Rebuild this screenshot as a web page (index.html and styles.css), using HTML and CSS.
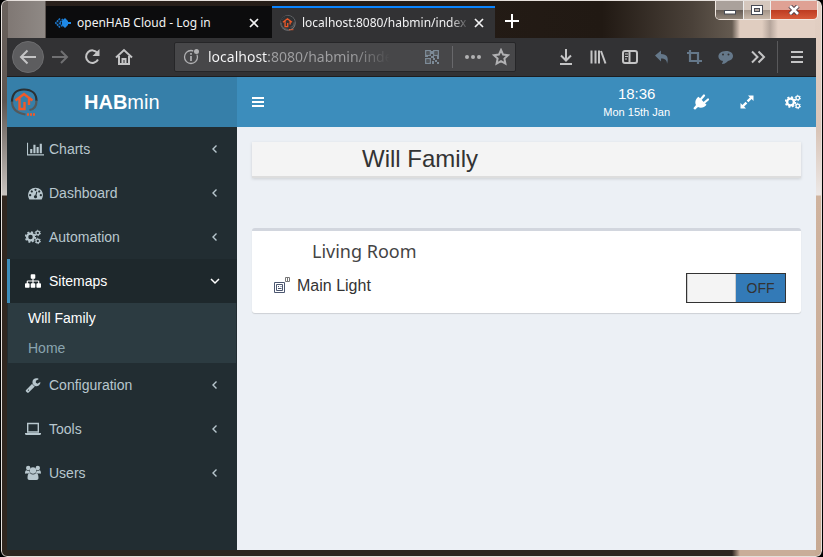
FILE: index.html
```html
<!DOCTYPE html>
<html lang="en">
<head>
<meta charset="utf-8">
<title>HABmin</title>
<link rel="stylesheet" href="styles.css">
</head>
<body>
<svg class="defs" aria-hidden="true">
  <symbol id="logo" viewBox="0 0 30 30">
    <path d="M2 15C2 7 6 2.500 14 2.500S26.500 7 26.500 14" fill="none" stroke="#2b3033" stroke-width="2.200"/>
    <path d="M2 14.500C2 22 6 26 15.500 27.500M26.500 13.500c0 6-2.500 9-7 9.500" fill="none" stroke="#54585a" stroke-width="2.200"/>
    <path d="M5.500 13.500L14 7l8.500 6.500M9.500 11.500V22h5v-7M19 11.500V18" fill="none" stroke="#f15a29" stroke-width="2.400"/>
    <path d="M17 27.500h8" stroke="#f15a29" stroke-width="2.400" stroke-dasharray="2 1"/>
  </symbol>
  <symbol id="gears" viewBox="0 0 16 16">
    <g fill="none" stroke="currentColor">
      <circle cx="5.500" cy="8" r="3.400" stroke-width="2.300"/>
      <circle cx="5.500" cy="8" r="4.900" stroke-width="1.600" stroke-dasharray="2 1.848"/>
      <circle cx="12.800" cy="4" r="1.800" stroke-width="1.300"/>
      <circle cx="12.800" cy="4" r="2.700" stroke-width="1" stroke-dasharray="1.400 1.427"/>
      <circle cx="12.800" cy="12" r="1.800" stroke-width="1.300"/>
      <circle cx="12.800" cy="12" r="2.700" stroke-width="1" stroke-dasharray="1.400 1.427"/>
    </g>
  </symbol>
  <symbol id="left" viewBox="0 0 10 10"><path d="M6.500 1.500L3 5l3.500 3.500" fill="none" stroke="currentColor" stroke-width="1.400"/></symbol>
  <symbol id="close" viewBox="0 0 10 10"><path d="M1 1l8 8M9 1L1 9" stroke="currentColor" stroke-width="1.700"/></symbol>
</svg>
<div class="window">
  <header class="titlebar">
    <div class="tabs">
      <div class="tab">
        <svg class="favicon" viewBox="0 0 16 16"><path d="M5 3.500L.800 8 5 12.500M8 4L4.500 8 8 12" fill="none" stroke="#1b75c9" stroke-width="1.700" stroke-dasharray="2 .6"/><path d="M10 3l3 3v1h3v2h-3v1l-3 3-3-3V6z" fill="#1e88e5"/></svg>
        <button class="tab-name" type="button">openHAB Cloud - Log in</button>
        <button class="close" type="button" aria-label="Close tab"><svg><use href="#close"/></svg></button>
      </div>
      <div class="tab active">
        <svg class="favicon" viewBox="0 0 30 30"><circle cx="15" cy="15" r="13.500" fill="none" stroke="#77777a" stroke-width="2"/><use href="#logo"/></svg>
        <button class="tab-name" type="button">localhost:8080/habmin/index</button>
        <button class="close" type="button" aria-label="Close tab"><svg><use href="#close"/></svg></button>
      </div>
      <button class="new-tab" type="button" aria-label="New tab"><svg viewBox="0 0 14 14"><path d="M7 0v14M0 7h14" stroke="#fff" stroke-width="2"/></svg></button>
    </div>
    <div class="controls">
      <button type="button" class="min" aria-label="Minimize"><svg viewBox="0 0 12 10"><rect x=".5" y="5.500" width="11" height="3.500" fill="#fff" stroke="#484b55"/></svg></button>
      <button type="button" class="max" aria-label="Maximize"><svg viewBox="0 0 12 10"><rect x=".5" y=".5" width="11" height="9" fill="#fff" stroke="#484b55"/><rect x="3.500" y="3.500" width="5" height="3" fill="#b7aaa1" stroke="#484b55"/></svg></button>
      <button type="button" class="quit" aria-label="Close"><svg viewBox="0 0 12 10"><path d="M2 1l8 8M10 1L2 9" stroke="#4a3b45" stroke-width="4.500"/><path d="M2 1l8 8M10 1L2 9" stroke="#fff" stroke-width="2.600"/></svg></button>
    </div>
  </header>
  <nav class="toolbar" aria-label="Browser">
    <button class="tool back" type="button" aria-label="Back"><svg viewBox="0 0 18 18"><path d="M17 9H2M8.500 2.500L2 9l6.500 6.500" class="line"/></svg></button>
    <button class="tool dim" type="button" aria-label="Forward"><svg viewBox="0 0 18 18"><path d="M1 9h15M10 3l6 6-6 6" class="line"/></svg></button>
    <button class="tool" type="button" aria-label="Reload"><svg viewBox="0 0 18 18"><path d="M14.500 5A6.300 6.300 0 1 0 15 11.500" class="line"/><path d="M16.500 1v7h-7z" fill="currentColor"/></svg></button>
    <button class="tool" type="button" aria-label="Home"><svg viewBox="0 0 18 18"><path d="M1 9.500L9 2l8 7.500M4 8v8h10V8" class="line"/><path d="M7.500 16v-5h3v5" class="line"/></svg></button>
    <div class="address">
      <svg class="info" viewBox="0 0 18 18"><circle cx="8" cy="9" r="6.500" fill="none" stroke="currentColor" stroke-width="1.300"/><path d="M8 8v5M8 5v1.700" stroke="currentColor" stroke-width="1.700"/><circle cx="13.500" cy="3.500" r="3.300" fill="#474749"/><circle cx="13.500" cy="3.500" r="2.500" fill="currentColor"/></svg>
      <input type="text" aria-label="Address" value="localhost:8080/habmin/index.html">
      <svg class="qr" viewBox="0 0 14 14"><g fill="none" stroke="currentColor" stroke-width="1.300"><path d="M.7.7h4.600v4.600H.7zM8.700.7h4.600v4.600H8.700zM.7 8.700h4.600v4.600H.7z"/></g><path d="M2.500 2.500h1v1h-1zM10.500 2.500h1v1h-1zM2.500 10.500h1v1h-1zM6 1h2v3H6zM6 6h3v2H6zM0 6h3v1H0zM8 8h2v2H8zM12 6h2v3h-2zM10 10h2v2h-2zM7 11h2v3H7zM12 12h2v2h-2z" fill="currentColor"/></svg>
      <button class="more" type="button" aria-label="Page actions"><svg viewBox="0 0 18 18"><circle cx="3" cy="9" r="2" fill="currentColor"/><circle cx="9" cy="9" r="2" fill="currentColor"/><circle cx="15" cy="9" r="2" fill="currentColor"/></svg></button>
      <button class="star" type="button" aria-label="Bookmark"><svg viewBox="0 0 18 18"><path d="M9 2l2.100 4.600 5 .6-3.700 3.400 1 5L9 13.100l-4.400 2.500 1-5L1.900 7.200l5-.6z" class="line"/></svg></button>
    </div>
    <button class="tool" type="button" aria-label="Downloads"><svg viewBox="0 0 18 18"><path d="M9 1v11M4 7.500l5 5 5-5M3 16h12" class="line"/></svg></button>
    <button class="tool" type="button" aria-label="Library"><svg viewBox="0 0 18 18"><path d="M2.500 2.500v13M6.500 2.500v13M10 2.500v13M12 3l4.500 12.500" class="line"/></svg></button>
    <button class="tool" type="button" aria-label="Sidebar"><svg viewBox="0 0 18 18"><rect x="2" y="3" width="14" height="12" rx="2" class="line"/><path d="M8.500 3v12" class="line"/><path d="M4 6h3M4 8.500h3M4 11h2" stroke="currentColor"/></svg></button>
    <button class="tool blue" type="button" aria-label="Undo"><svg viewBox="0 0 18 18"><path d="M2 7.500L8 2.500V6c6 0 8 3.500 6 10 0-4-2-5.500-6-5.500v3z" fill="currentColor"/></svg></button>
    <button class="tool blue" type="button" aria-label="Crop"><svg viewBox="0 0 18 18"><path d="M5 2v11h12M2 5h11v11" fill="none" stroke="currentColor" stroke-width="2.200"/></svg></button>
    <button class="tool blue" type="button" aria-label="Chat"><svg viewBox="0 0 18 18"><path d="M9 3c9 0 9 9 2 10-3 3-5 3-6 3l1-3C-1 12 0 3 9 3z" fill="currentColor"/><circle cx="6" cy="6.500" r="1" fill="#323234"/><circle cx="11.500" cy="6.500" r="1" fill="#323234"/></svg></button>
    <button class="tool" type="button" aria-label="More tools"><svg viewBox="0 0 18 18"><path d="M3 3.500L8.500 9 3 14.500M9.500 3.500L15 9l-5.500 5.500" class="line"/></svg></button>
    <span class="divider"></span>
    <button class="tool" type="button" aria-label="Menu"><svg viewBox="0 0 18 18"><path d="M3 4h12M3 9h12M3 14h12" class="line"/></svg></button>
  </nav>
  <div class="app">
    <aside class="sidebar">
      <a class="brand" href="#"><svg class="brand-logo"><use href="#logo"/></svg><span class="brand-name"><b>HAB</b>min</span></a>
      <nav aria-label="Main">
        <ul class="menu">
          <li><a href="#"><svg class="icon wide" viewBox="0 0 2048 1792"><path fill="currentColor" d="M640 896v512h-256v-512h256zm384-512v1024h-256v-1024h256zm1024 1152v128h-2048v-1536h128v1408h1920zm-640-896v768h-256v-768h256zm384-384v1152h-256v-1152h256z"/></svg><span>Charts</span><svg class="arrow"><use href="#left"/></svg></a></li>
          <li><a href="#"><svg class="icon wide" viewBox="-128 0 2048 1792"><path fill="currentColor" d="M384 1152q0-53-37.500-90.500t-90.500-37.500-90.500 37.500-37.500 90.500 37.500 90.500 90.500 37.500 90.500-37.500 37.500-90.500zm192-448q0-53-37.500-90.500t-90.500-37.500-90.500 37.500-37.500 90.500 37.500 90.500 90.500 37.500 90.500-37.500 37.500-90.500zm428 481l101-382q6-26-7.500-48.500t-38.500-29.500-48 6.500-30 39.500l-101 382q-60 5-107 43.500t-63 98.500q-20 77 20 146t117 89 146-20 89-117q16-60-6-117t-72-91zm660-33q0-53-37.500-90.500t-90.500-37.500-90.500 37.500-37.500 90.500 37.500 90.500 90.500 37.500 90.500-37.500 37.500-90.500zm-640-640q0-53-37.500-90.500t-90.500-37.500-90.500 37.500-37.500 90.500 37.500 90.500 90.500 37.500 90.500-37.500 37.500-90.500zm448 192q0-53-37.500-90.500t-90.500-37.500-90.500 37.500-37.500 90.500 37.500 90.500 90.500 37.500 90.500-37.500 37.500-90.500zm320 448q0 261-141 483-19 29-54 29h-1402q-35 0-54-29-141-221-141-483 0-182 71-348t191-286 286-191 348-71 348 71 286 191 191 286 71 348z"/></svg><span>Dashboard</span><svg class="arrow"><use href="#left"/></svg></a></li>
          <li><a href="#"><svg class="icon"><use href="#gears"/></svg><span>Automation</span><svg class="arrow"><use href="#left"/></svg></a></li>
          <li class="open"><a href="#"><svg class="icon" viewBox="0 0 1792 1792"><path fill="currentColor" d="M1792 1248v320q0 40-28 68t-68 28h-320q-40 0-68-28t-28-68v-320q0-40 28-68t68-28h96v-192h-512v192h96q40 0 68 28t28 68v320q0 40-28 68t-68 28h-320q-40 0-68-28t-28-68v-320q0-40 28-68t68-28h96v-192h-512v192h96q40 0 68 28t28 68v320q0 40-28 68t-68 28h-320q-40 0-68-28t-28-68v-320q0-40 28-68t68-28h96v-192q0-52 38-90t90-38h512v-192h-96q-40 0-68-28t-28-68v-320q0-40 28-68t68-28h320q40 0 68 28t28 68v320q0 40-28 68t-68 28h-96v192h512q52 0 90 38t38 90v192h96q40 0 68 28t28 68z"/></svg><span>Sitemaps</span><svg class="arrow" viewBox="0 0 10 10"><path d="M1 3l4 4 4-4" fill="none" stroke="currentColor" stroke-width="1.500"/></svg></a>
            <ul class="submenu"><li><a class="current" href="#">Will Family</a></li><li><a href="#">Home</a></li></ul>
          </li>
          <li><a href="#"><svg class="icon" viewBox="0 0 1792 1792"><path fill="currentColor" d="M448 1472q0-26-19-45t-45-19-45 19-19 45 19 45 45 19 45-19 19-45zm644-420l-682 682q-37 37-90 37-52 0-91-37l-106-108q-38-36-38-90 0-53 38-91l681-681q39 98 114.500 173.500t173.500 114.500zm634-435q0 39-23 106-47 134-164.500 217.500t-258.500 83.500q-185 0-316.500-131.500t-131.500-316.500 131.500-316.500 316.500-131.500q58 0 121.500 16.500t107.500 46.500q16 11 16 28t-16 28l-293 169v224l193 107q5-3 79-48.500t135.500-81 70.500-35.500q15 0 23.500 10t8.500 25z"/></svg><span>Configuration</span><svg class="arrow"><use href="#left"/></svg></a></li>
          <li><a href="#"><svg class="icon" viewBox="0 0 16 16"><path d="M2.700 2.500h10.600v8.500H2.700z" fill="none" stroke="currentColor" stroke-width="1.400"/><path d="M0 12h16v1.300l-1 .7H1l-1-.7z" fill="currentColor"/></svg><span>Tools</span><svg class="arrow"><use href="#left"/></svg></a></li>
          <li><a href="#"><svg class="icon" viewBox="0 0 16 16"><g fill="currentColor"><circle cx="3.200" cy="3" r="2.200"/><circle cx="12.800" cy="3" r="2.200"/><path d="M0 8.500c0-3 1-3.500 1.500-3.300 1.200.7 2.300.7 3 .4 0 1.400.3 2.200 1 3H1.300C.5 8.700 0 9 0 8.500zM16 8.500c0-3-1-3.500-1.500-3.300-1.200.7-2.300.7-3 .4 0 1.400-.3 2.200-1 3h4.200c.8 0 1.300.4 1.300-.1z"/><circle cx="8" cy="5.500" r="3.200"/><path d="M2.500 13c0-4 1.300-5 2.500-4.700 2 1.600 4 1.600 6 0 1.200-.3 2.500.7 2.500 4.700 0 1.200-.7 2-2 2h-7c-1.300 0-2-.8-2-2z"/></g></svg><span>Users</span><svg class="arrow"><use href="#left"/></svg></a></li>
        </ul>
      </nav>
    </aside>
    <div class="page">
      <header class="topbar">
        <button class="top-button" type="button" aria-label="Toggle navigation"><svg viewBox="0 0 14 14"><path d="M1 3h12M1 7h12M1 11h12" stroke="currentColor" stroke-width="2"/></svg></button>
        <div class="clock"><time class="time">18:36</time><time class="date">Mon 15th Jan</time></div>
        <button class="top-button" type="button" aria-label="Connection"><svg viewBox="0 0 16 16"><path d="M11 1.500L8 5M15 5.500L11.500 8.500" stroke="currentColor" stroke-width="2.200" stroke-linecap="round"/><path d="M5.500 2.800l8 8c-2 2.700-5.700 3.700-8.500 2.200L2 15.800.3 14.200 3 11C1.500 8.300 2.700 4.800 5.500 2.800z" fill="currentColor"/></svg></button>
        <button class="top-button" type="button" aria-label="Full screen"><svg viewBox="0 0 16 16"><path d="M9 1.500h5.500V7l-1.900-1.900-3.200 3.200-1.700-1.700 3.200-3.200zM7 14.500H1.500V9l1.900 1.900 3.200-3.200 1.700 1.700-3.200 3.200z" fill="currentColor"/></svg></button>
        <button class="top-button" type="button" aria-label="Settings"><svg><use href="#gears"/></svg></button>
      </header>
      <main class="content">
        <h1>Will Family</h1>
        <section class="box">
          <h2>Living Room</h2>
          <div class="row">
            <svg class="outlet" viewBox="0 0 18 18"><g fill="none" stroke="#4c5770"><path d="M1.500 6.500h10v10h-10zM3.500 8.500h6v6h-6z"/><path d="M5 10.500h1M7.500 10.500h1M5 12.500h3.500" stroke-width="1"/><path d="M12.500 1.500h4v4h-4zM14.500 1v5" stroke="#777"/></g></svg>
            <span class="label" id="light">Main Light</span>
            <button class="switch" type="button" role="switch" aria-checked="false" aria-labelledby="light"><span class="handle"></span><span class="state">OFF</span></button>
          </div>
        </section>
      </main>
    </div>
  </div>
</div>
</body>
</html>
```
FILE: styles.css
```css
* { box-sizing: border-box; }
body {
  margin: 0;
  background: #000;
  font-family: "Liberation Sans", Arial, sans-serif;
  font-size: 14px;
  line-height: 20px;
}
button, input { margin: 0; padding: 0; border: 0; background: none; color: inherit; font: inherit; }
a { color: inherit; text-decoration: none; }
ul { margin: 0; padding: 0; list-style: none; }
svg { display: block; flex: none; }
.defs { position: absolute; width: 0; height: 0; }
.line { fill: none; stroke: currentColor; stroke-width: 2; }

.window {
  display: flex;
  flex-direction: column;
  min-height: 100vh;
  padding: 0 5px 6px;
  border: 1px solid #e6e0dc;
  outline: 1px solid #000;
  border-radius: 6px;
  margin: 0 1px;
  background:
    linear-gradient(#6a625d, #5e5550 100px, #c8c3bf 194px, #30261f 195px, #30261f) left / 6px 100% no-repeat,
    linear-gradient(#e3d0c4, #d9c5b8 130px, #ece8e6 194px, #cfb39e 195px, #c7aa94) right / 6px 100% no-repeat,
    linear-gradient(90deg, #2e2621 730px, #c9ad99 738px) bottom / 100% 8px no-repeat,
    linear-gradient(90deg, #7d7571, #8f8985 43px, #2a211c 44px, #211913 600px, #4a4139 690px, #645a50 730px, #e0cdc0 738px, #e0cdc0 760px, #b5a59b 768px, #e3d0c4 776px);
}
.titlebar { display: flex; justify-content: space-between; height: 37px; }
.tabs { display: flex; align-items: flex-end; padding-left: 39px; font-family: "Noto Sans", sans-serif; font-size: 12px; color: #f2f2f3; }
.tab {
  display: flex;
  align-items: center;
  width: 226px;
  height: 32px;
  padding: 0 13px 0 9px;
  border-top: 2px solid #0c0c0d;
  background: #0c0c0d;
}
.tab.active { width: 223px; padding: 0 11px 0 8px; border-color: #0a84ff; background: #323234; }
.favicon { width: 16px; height: 16px; margin-right: 6px; }
.tab-name { flex: 1; min-width: 0; overflow: hidden; text-align: left; white-space: nowrap; }
.active .tab-name { mask-image: linear-gradient(90deg, #000 88%, transparent); }
.close { margin-left: 4px; }
.close svg { width: 10px; height: 10px; }
.new-tab { width: 34px; height: 34px; padding: 0 10px; }
.new-tab svg { width: 14px; height: 14px; }

.controls { display: flex; height: 19px; margin-right: -2px; border: 1px solid #f2e9e3; border-top: 0; border-radius: 0 0 5px 5px; overflow: hidden; }
.controls button { display: grid; place-items: center; width: 28px; border-right: 1px solid #eee; }
.controls svg { width: 12px; height: 10px; }
.controls .min { background: linear-gradient(#aaa19b 50%, #655b54 50%, #91857a); }
.controls .max { width: 27px; background: linear-gradient(#d5c7bd 50%, #a39488 50%, #c9b9ab); }
.controls .quit { width: 46px; border: 0; background: linear-gradient(#dfa194 50%, #bd3b21 50%, #d65a3a); }

.toolbar { display: flex; align-items: center; height: 39px; padding: 0 3px 0 5px; background: #323234; border-bottom: 1px solid #1d1d1f; color: #c4c4c5; }
.tool { display: grid; place-items: center; flex: none; width: 32px; height: 32px; border-radius: 50%; }
.tool svg { width: 18px; height: 18px; }
.back { border: 1px solid #6c6c6e; background: #5d5d5f; }
.dim { color: #707072; }
.blue { color: #65788a; }
.address {
  display: flex;
  align-items: center;
  flex: 1;
  min-width: 0;
  height: 30px;
  margin: 0 34px;
  padding: 0 5px 0 8px;
  border: 1px solid #262628;
  border-radius: 2px;
  background: #474749;
  color: #b1b1b3;
}
.address svg { width: 18px; height: 18px; }
.address input {
  flex: 1;
  min-width: 0;
  margin: 0 36px 0 7px;
  font-family: "Noto Sans", sans-serif;
  font-size: 14px;
  color: transparent;
  background: linear-gradient(90deg, #f9f9fa 60px, #a0a0a2 61px, #a0a0a2 145px, transparent 182px);
  background-clip: text;
}
.address .qr { width: 14px; height: 14px; color: #7d8b98; }
.more { margin-left: 13px; padding: 2px 0 2px 11px; border-left: 1px solid #68686b; }
.star { margin-left: 10px; }
.divider { width: 1px; height: 32px; margin: 0 3px; background: #59595b; }

.app { display: flex; flex: 1; }
.sidebar { flex: none; width: 230px; background: #222d32; color: #b8c7ce; }
.brand { display: flex; align-items: center; height: 50px; padding-left: 3px; background: #367fa9; color: #fff; font-size: 20px; }
.brand-logo { width: 30px; height: 30px; }
.brand-name { margin-left: 44px; }
.menu > li > a { display: flex; align-items: center; height: 44px; padding: 0 17px 0 15px; border-left: 3px solid transparent; }
.icon { width: 16px; height: 16px; margin-right: 8px; }
.icon.wide { width: 17px; margin: 0 5px 0 2px; }
.arrow { width: 10px; height: 10px; margin-left: auto; }
.menu > .open > a { border-color: #3c8dbc; background: #1e282c; color: #fff; }
.submenu { margin: 0 1px; background: #2c3b41; color: #8aa4af; }
.submenu a { display: block; padding: 5px 20px; }
.submenu .current { color: #fff; }

.page { flex: 1; min-width: 0; background: #ecf0f5; }
.topbar { display: flex; align-items: center; height: 50px; background: #3c8dbc; color: #fff; }
.top-button { display: grid; place-items: center; width: 46px; height: 50px; }
.top-button:first-child { width: 42px; }
.top-button svg { width: 16px; height: 16px; }
.top-button:first-child svg { width: 14px; height: 14px; }
.clock { display: flex; flex-direction: column; margin-left: auto; padding-right: 8px; text-align: center; }
.time { font-size: 15px; line-height: 20px; }
.date { font-size: 11px; line-height: 16px; }
.content { padding: 15px; }
h1, h2 { margin: 0; color: #333; font-weight: 400; }
h1 { height: 36px; padding-left: 110px; border-bottom: 2px solid #ddd; background: #f4f4f4; box-shadow: 0 1px 3px #0002; font-size: 24px; line-height: 34px; }
.box { margin-top: 50px; padding: 8px 15px 10px; border-top: 3px solid #d2d6de; border-radius: 3px; background: #fff; box-shadow: 0 1px 1px #0002; }
h2 { padding-left: 45px; color: #444; font-family: "Noto Sans", sans-serif; font-size: 18px; line-height: 24px; }
.row { display: flex; align-items: flex-start; margin-top: 10px; padding-left: 6px; color: #333; }
.outlet { width: 18px; height: 18px; margin-top: 3px; }
.label { margin-left: 6px; font-size: 16px; line-height: 26px; }
.switch { display: flex; width: 100px; height: 30px; margin-left: auto; border: 1px solid #333; background: #337ab7; }
.handle { width: 49px; height: 28px; border: 1px solid #ccc; border-width: 0 1px; background: #f4f4f4; }
.state { flex: 1; line-height: 28px; text-align: center; }
```
